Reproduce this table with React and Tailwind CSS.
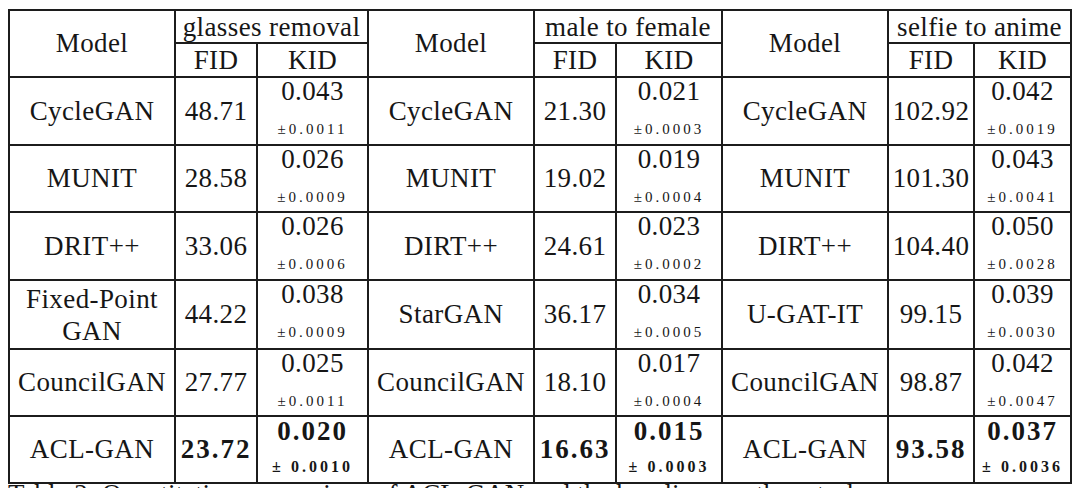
import React from "react";

const groups = [
  {
    title: "glasses removal",
    rows: [
      ["CycleGAN", "48.71", "0.043", "±0.0011"],
      ["MUNIT", "28.58", "0.026", "±0.0009"],
      ["DRIT++", "33.06", "0.026", "±0.0006"],
      [["Fixed-Point", "GAN"], "44.22", "0.038", "±0.0009"],
      ["CouncilGAN", "27.77", "0.025", "±0.0011"],
      ["ACL-GAN", "23.72", "0.020", "± 0.0010"],
    ],
  },
  {
    title: "male to female",
    rows: [
      ["CycleGAN", "21.30", "0.021", "±0.0003"],
      ["MUNIT", "19.02", "0.019", "±0.0004"],
      ["DIRT++", "24.61", "0.023", "±0.0002"],
      ["StarGAN", "36.17", "0.034", "±0.0005"],
      ["CouncilGAN", "18.10", "0.017", "±0.0004"],
      ["ACL-GAN", "16.63", "0.015", "± 0.0003"],
    ],
  },
  {
    title: "selfie to anime",
    rows: [
      ["CycleGAN", "102.92", "0.042", "±0.0019"],
      ["MUNIT", "101.30", "0.043", "±0.0041"],
      ["DIRT++", "104.40", "0.050", "±0.0028"],
      ["U-GAT-IT", "99.15", "0.039", "±0.0030"],
      ["CouncilGAN", "98.87", "0.042", "±0.0047"],
      ["ACL-GAN", "93.58", "0.037", "± 0.0036"],
    ],
  },
];

const serif = "font-['Liberation_Serif',serif]";
const box = "bg-white flex items-center justify-center whitespace-nowrap " + serif;

function Name({ v }) {
  if (Array.isArray(v)) {
    return (
      <div className={box + " flex-col leading-[32px]"}>
        {v.map((l) => (
          <div key={l}>{l}</div>
        ))}
      </div>
    );
  }
  return <div className={box}>{v}</div>;
}

function Kid({ main, pm, bold }) {
  return (
    <div className={"bg-white flex flex-col items-center whitespace-nowrap " + serif}>
      <div
        className={
          bold
            ? "leading-[27px] font-bold tracking-[2px] mt-[1px]"
            : "leading-[27px]"
        }
      >
        {main}
      </div>
      <div
        className={
          bold
            ? "mt-[14px] text-[16px] leading-[16px] font-bold tracking-[3px]"
            : "mt-[17px] text-[15px] leading-[15px] tracking-[3px]"
        }
      >
        {pm}
      </div>
    </div>
  );
}

export default function App() {
  return (
    <div className={"w-[1080px] h-[488px] overflow-hidden bg-white text-[#161616] " + serif}>
      <div className="pl-[8px] pt-[9px]">
        <div
          className={
            "grid w-[1064px] grid-cols-[164px_80px_109px_164px_80px_104px_164px_84px_95px] grid-rows-[31px_32px_66px_65px_66px_67px_65px_65px] gap-[2px] p-[2px] bg-[#1c1c1c] text-[27px] tracking-[0.4px] " +
            serif
          }
        >
          {groups.map((g) => (
            <React.Fragment key={g.title + "h"}>
              <div className={box + " row-span-2 leading-[27px]"}>Model</div>
              <div className={box + " col-span-2 leading-[30px] pt-[1px]"}>{g.title}</div>
            </React.Fragment>
          ))}
          {groups.map((g) => (
            <React.Fragment key={g.title + "s"}>
              <div className={box + " leading-[30px]"}>FID</div>
              <div className={box + " leading-[30px]"}>KID</div>
            </React.Fragment>
          ))}
          {[0, 1, 2, 3, 4, 5].map((ri) => {
            const bold = ri === 5;
            return groups.map((g) => {
              const r = g.rows[ri];
              return (
                <React.Fragment key={g.title + ri}>
                  <Name v={r[0]} />
                  <div className={box + (bold ? " font-bold tracking-[2px]" : "")}>{r[1]}</div>
                  <Kid main={r[2]} pm={r[3]} bold={bold} />
                </React.Fragment>
              );
            });
          })}
        </div>
        <div className={"mt-[1px] text-[27px] leading-[18px] whitespace-nowrap " + serif}>
          Table 2: Quantitative comparison of ACL-GAN and the baselines on three tasks.
        </div>
      </div>
    </div>
  );
}
